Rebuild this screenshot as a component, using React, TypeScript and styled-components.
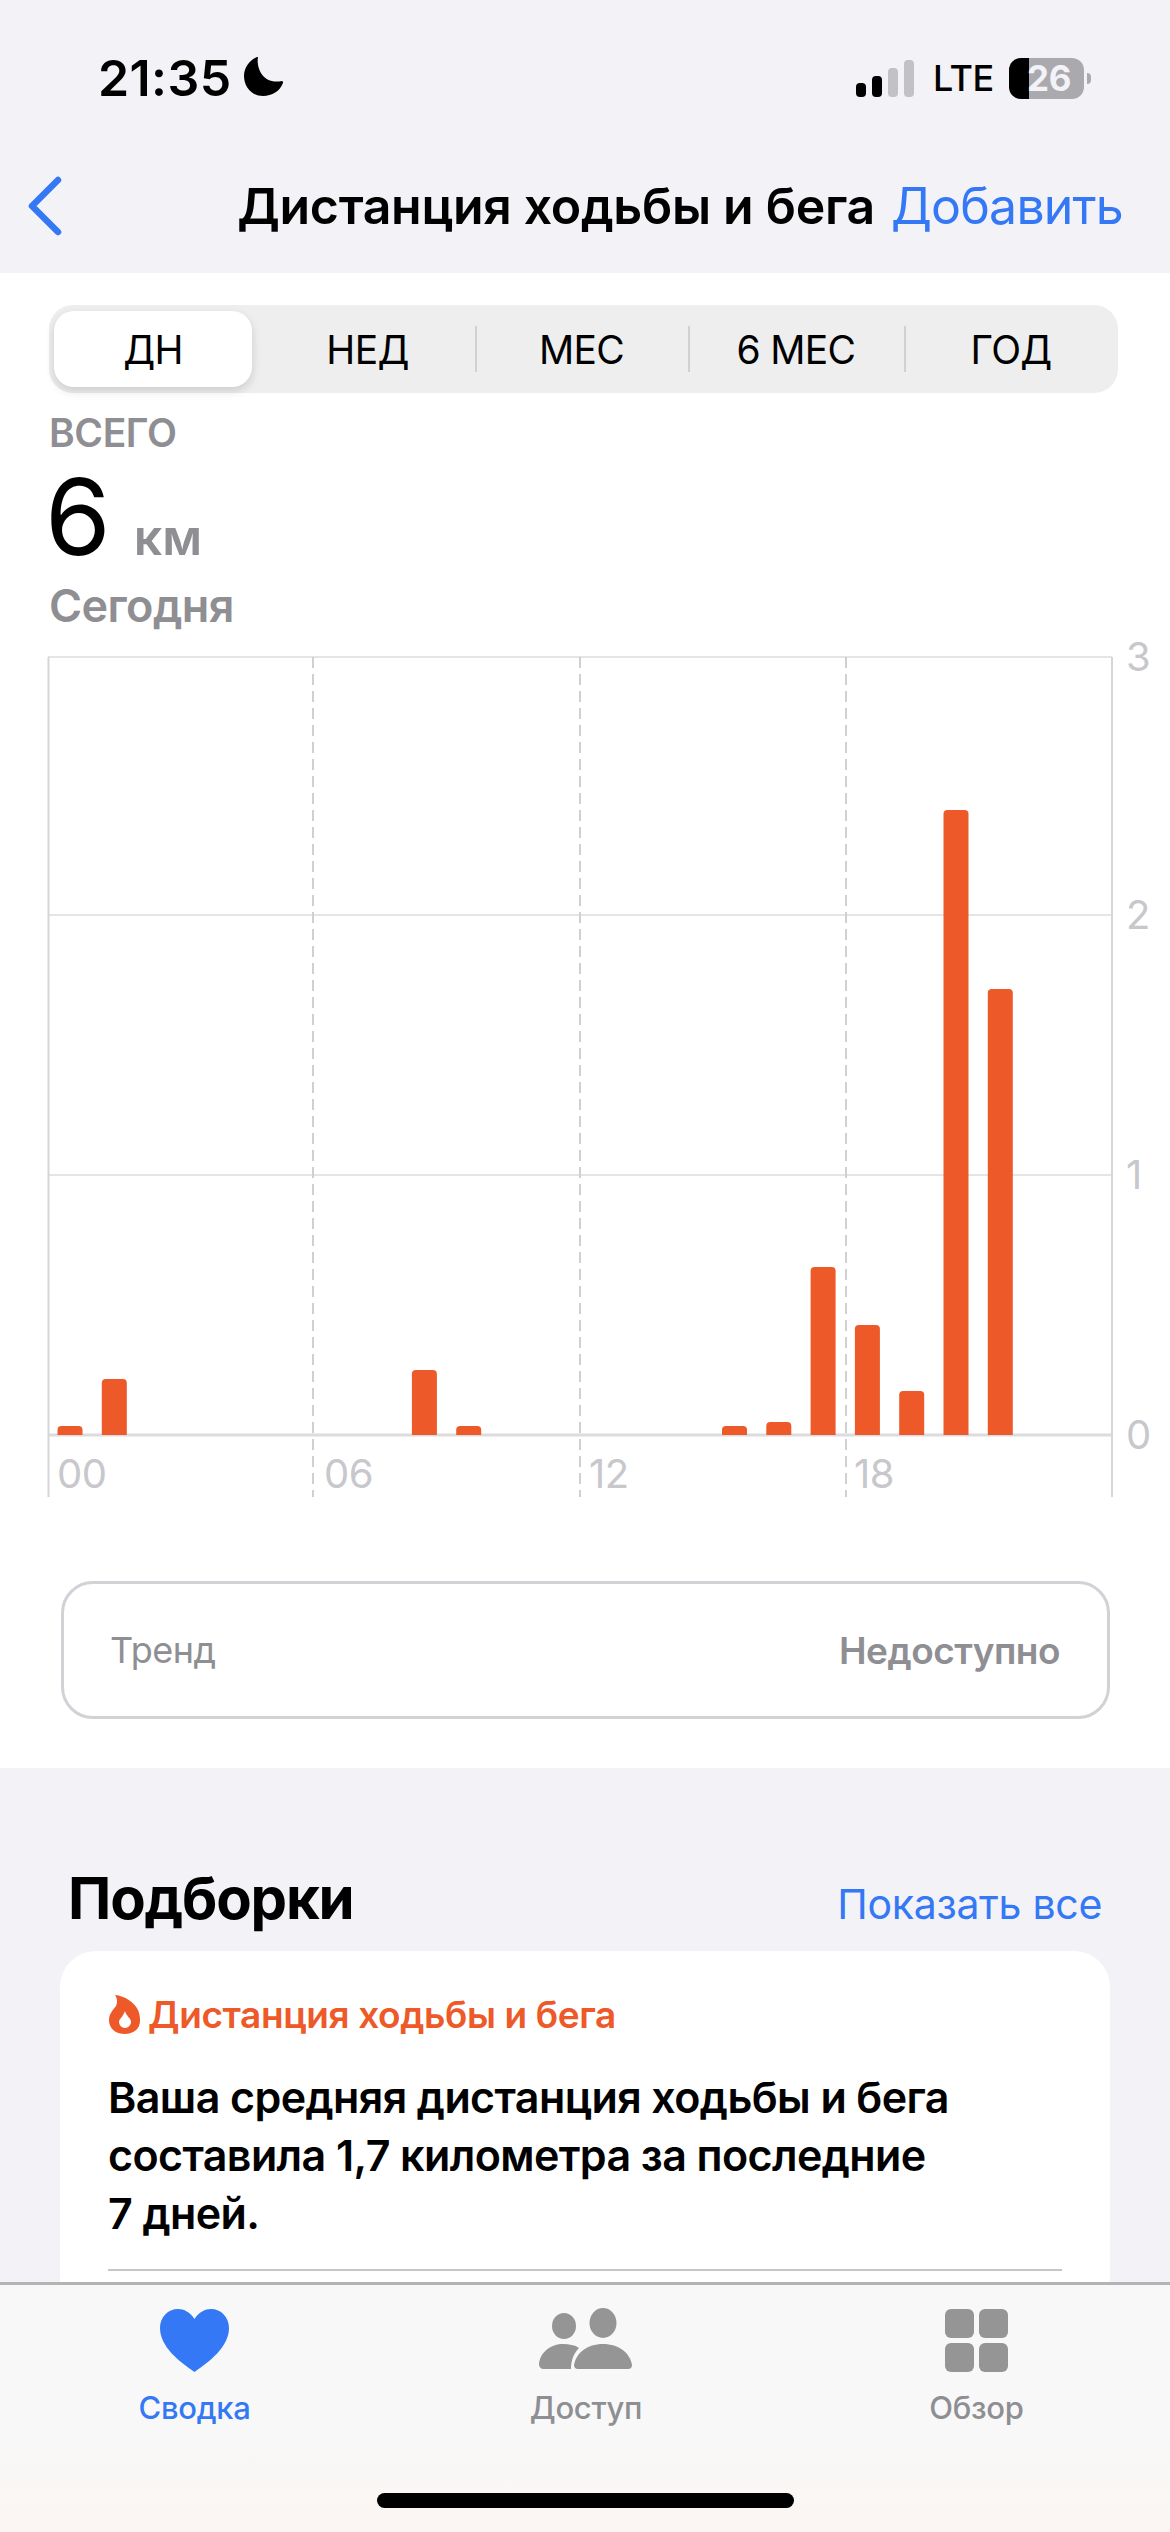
import styled, { createGlobalStyle } from 'styled-components';

const GlobalStyle = createGlobalStyle`
  html, body {
    margin: 0;
    padding: 0;
    background: #f2f2f7;
  }

  * {
    box-sizing: border-box;
  }
`;

const BLUE = '#3478f6';
const ORANGE = '#ed5928';
const GRAY = '#8e8e93';
const AXIS = '#c7c7cc';

const CHART_LEFT = 48.5;
const HOUR_WIDTH = 44.3;
const CHART_BOTTOM = 1435;

const bars = [
  { hour: 0, height: 9 },
  { hour: 1, height: 56 },
  { hour: 8, height: 65 },
  { hour: 9, height: 9 },
  { hour: 15, height: 9 },
  { hour: 16, height: 13 },
  { hour: 17, height: 168 },
  { hour: 18, height: 110 },
  { hour: 19, height: 44 },
  { hour: 20, height: 625 },
  { hour: 21, height: 446 },
];

const segments = [
  { label: 'ДН', selected: true },
  { label: 'НЕД' },
  { label: 'МЕС', divider: true },
  { label: '6 МЕС', divider: true },
  { label: 'ГОД', divider: true },
];

const Screen = styled.div`
  position: relative;
  width: 1170px;
  height: 2532px;
  overflow: hidden;
  background: #f2f2f7;
  font-family: Inter, 'Noto Sans', sans-serif;
  color: #000;
`;

const StatusBar = styled.div`
  display: flex;
  align-items: center;
  justify-content: space-between;
  height: 156px;
  padding: 0 86px 0 98px;
`;

const TimeGroup = styled.div`
  display: flex;
  align-items: center;
  gap: 13px;
`;

const Time = styled.span`
  font-size: 50px;
  font-weight: 600;
  letter-spacing: 0.4px;
  line-height: 60px;
`;

const MoonIcon = styled.svg`
  margin: -10px;
`;

const StatusIcons = styled.div`
  display: flex;
  align-items: center;
`;

const Lte = styled.span`
  width: 57px;
  margin: 0 19px;
  font-size: 36px;
  font-weight: 500;
  line-height: 48px;
  letter-spacing: -0.5px;
  white-space: nowrap;
`;

const Battery = styled.div`
  position: relative;
  display: flex;
  align-items: center;
  justify-content: center;
  width: 75px;
  height: 41px;
  padding-left: 5px;
  border-radius: 12px;
  background: linear-gradient(to right, #000 20px, #a9a9ae 20px);
  color: #f2f2f7;
  font-size: 35px;
  font-weight: 700;
  letter-spacing: -0.5px;

  &::after {
    content: '';
    position: absolute;
    top: 15px;
    right: -7px;
    width: 4px;
    height: 11px;
    border-radius: 0 6px 6px 0;
    background: #a9a9ae;
  }
`;

const NavBar = styled.div`
  display: flex;
  align-items: center;
  justify-content: space-between;
  height: 117px;
  padding: 0 47px 17px 28px;
`;

const NavRight = styled.div`
  display: flex;
  align-items: center;
  gap: 16px;
`;

const NavTitle = styled.span`
  font-size: 50px;
  font-weight: 600;
  line-height: 60px;
  letter-spacing: -0.3px;
`;

const NavAction = styled.span`
  color: ${BLUE};
  font-size: 50px;
  line-height: 60px;
  letter-spacing: -0.8px;
`;

const ChartSection = styled.section`
  padding: 32px 0 49px;
  background: #fff;
`;

const Segments = styled.div`
  display: grid;
  grid-template-columns: 211px 215px 213px 216px 214px;
  width: 1069px;
  height: 88px;
  margin-left: 49px;
  border-radius: 24px;
  background: #eeeeef;
`;

const Segment = styled.div<{ $selected?: boolean; $divider?: boolean }>`
  position: relative;
  display: flex;
  align-items: center;
  justify-content: center;
  margin: ${({ $selected }) => ($selected ? '6px 8px 6px 5px' : '0')};
  border-radius: 20px;
  background: ${({ $selected }) => ($selected ? '#fff' : 'transparent')};
  box-shadow: ${({ $selected }) => ($selected ? '0 4px 10px rgba(0, 0, 0, 0.14)' : 'none')};
  font-size: 39px;
  letter-spacing: -0.7px;

  &::before {
    content: '';
    display: ${({ $divider }) => ($divider ? 'block' : 'none')};
    position: absolute;
    top: 21px;
    left: 0;
    width: 2px;
    height: 46px;
    background: #d1d1d4;
  }
`;

const Summary = styled.div`
  padding: 17px 49px 0;
`;

const SummaryLabel = styled.div`
  color: ${GRAY};
  font-size: 39px;
  font-weight: 600;
  line-height: 46px;
  letter-spacing: -0.4px;
`;

const ValueRow = styled.div`
  display: flex;
  align-items: baseline;
  gap: 23px;
  height: 112px;
  margin-top: 5px;
`;

const Value = styled.span`
  margin-left: -4px;
  font-size: 106px;
  font-weight: 400;
  line-height: 112px;
`;

const Unit = styled.span`
  color: ${GRAY};
  font-size: 50px;
  font-weight: 600;
`;

const SummaryDate = styled.div`
  margin-top: 7px;
  color: ${GRAY};
  font-size: 45px;
  font-weight: 600;
  line-height: 52px;
  letter-spacing: -0.6px;
`;

const ChartSvg = styled.svg`
  display: block;
  width: 1170px;
  height: 870px;
  margin-top: -2px;
`;

const AxisLabel = styled.text`
  fill: ${AXIS};
  font-family: Inter, 'Noto Sans', sans-serif;
  font-size: 40px;
  letter-spacing: -0.6px;
`;

const TrendBox = styled.div`
  display: flex;
  align-items: center;
  justify-content: space-between;
  height: 138px;
  margin: 81px 60px 0 61px;
  padding: 0 47px 0 46px;
  border: 3px solid #d1d1d6;
  border-radius: 32px;
  color: ${GRAY};
  font-size: 36px;
  letter-spacing: -0.5px;
`;

const TrendValue = styled.span`
  font-size: 37px;
  font-weight: 600;
`;

const Collections = styled.section`
  padding: 98px 60px 0;
`;

const CollectionsHeader = styled.div`
  display: flex;
  align-items: center;
  justify-content: space-between;
  height: 64px;
  padding: 0 8px;
  margin-bottom: 21px;
`;

const CollectionsTitle = styled.h2`
  margin: 0;
  font-size: 58px;
  font-weight: 700;
  letter-spacing: -1.2px;
`;

const ShowAll = styled.span`
  padding-top: 12px;
  color: ${BLUE};
  font-size: 41px;
  letter-spacing: -0.3px;
`;

const Card = styled.div`
  height: 480px;
  padding: 38px 48px 0;
  border-radius: 36px;
  background: #fff;
`;

const CardLabel = styled.div`
  display: flex;
  align-items: center;
  height: 50px;
  color: ${ORANGE};
  font-size: 37px;
  font-weight: 600;
  letter-spacing: -0.4px;
`;

const CardText = styled.p`
  margin: 29px 0 0;
  font-size: 43px;
  font-weight: 600;
  line-height: 58px;
  letter-spacing: -0.6px;
`;

const CardDivider = styled.div`
  height: 2px;
  margin-top: 27px;
  background: #c6c6c8;
`;

const TabBar = styled.nav`
  position: absolute;
  left: 0;
  right: 0;
  bottom: 0;
  height: 250px;
  border-top: 3px solid #b4b4b6;
  background: linear-gradient(to bottom, #f8f8f8 0%, #f8f8f8 60%, #fbf6f3 100%);
`;

const TabList = styled.div`
  display: grid;
  grid-template-columns: 389px 394px 387px;
`;

const Tab = styled.div<{ $active?: boolean }>`
  display: flex;
  flex-direction: column;
  align-items: center;
  color: ${({ $active }) => ($active ? BLUE : GRAY)};
  font-size: 31px;
  font-weight: 500;
  letter-spacing: -0.3px;
`;

const TabIcon = styled.div`
  display: flex;
  align-items: center;
  justify-content: center;
  height: 80px;
  margin: 15px 0 9px;
`;

const TileGrid = styled.div`
  display: grid;
  grid-template-columns: 29px 29px;
  grid-template-rows: 29px 29px;
  gap: 5px;
`;

const Tile = styled.div`
  border-radius: 6px;
  background: #959595;
`;

const HomeIndicator = styled.div`
  position: absolute;
  left: 377px;
  bottom: 24px;
  width: 417px;
  height: 15px;
  border-radius: 8px;
  background: #000;
`;

const Moon = () => (
  <MoonIcon width="60" height="60" viewBox="0 0 60 60">
    <path
      d="M23 9C21 20 28 37 47 33C48 33 48 34 48 35C45 43 37 48 28 48C17 48 9 39 9 28C9 19 15 12 22 9Z"
      fill="#000"
    />
  </MoonIcon>
);

const Signal = () => (
  <svg width="58" height="37" viewBox="0 0 58 37">
    <rect x="0" y="23" width="10" height="14" rx="4" fill="#000" />
    <rect x="16" y="16" width="10" height="21" rx="4" fill="#000" />
    <rect x="32" y="8" width="10" height="29" rx="4" fill="#c1c1c6" />
    <rect x="48" y="0" width="10" height="37" rx="4" fill="#c1c1c6" />
  </svg>
);

const BackChevron = () => (
  <svg width="34" height="60" viewBox="0 0 34 60">
    <path
      d="M30 4L4 30L30 56"
      fill="none"
      stroke={BLUE}
      strokeWidth="6.5"
      strokeLinecap="round"
      strokeLinejoin="round"
    />
  </svg>
);

const Flame = () => (
  <svg width="40" height="50" viewBox="10 5 40 50">
    <path
      d="M17 11C27 12 36 18 40 26C42 31 42 34 42 37C42 45 35 50 27 50C17 50 11 44 11 36C11 30 15 26 18 22C20 18 19 14 17 11Z"
      fill={ORANGE}
    />
    <path
      d="M27 27C28 32 33 34 33 38C33 41 30 44 27 44C24 44 21 41 21 38C21 35 25 33 27 27Z"
      fill="#fff"
    />
  </svg>
);

const Heart = () => (
  <svg width="69" height="63" viewBox="0 0 69 63">
    <path
      d="M34.5 10C30 3 24 0 18 0C8 0 0 8 0 19C0 38 20 53 34.5 63C49 53 69 38 69 19C69 8 61 0 51 0C45 0 39 3 34.5 10Z"
      fill={BLUE}
    />
  </svg>
);

const People = () => (
  <svg width="110" height="80" viewBox="0 0 110 80">
    <ellipse cx="33" cy="26" rx="12" ry="13" fill="#959595" />
    <ellipse cx="72" cy="23" rx="13.5" ry="15" fill="#959595" />
    <path
      d="M8 64C9 52 20 44 32 44C38 44 44 45 48 48C43 53 40 60 40 69L13 69C10 69 8 67 8 64Z"
      fill="#959595"
    />
    <path
      d="M43 65C45 53 56 44 72 44C88 44 99 53 101 65C101 67 100 69 97 69L47 69C44 69 43 67 43 65Z"
      fill="#959595"
    />
  </svg>
);

const Chart = () => (
  <ChartSvg viewBox="0 630 1170 870">
    {[657, 915, 1175].map((y) => (
      <line key={y} x1="48" x2="1112" y1={y} y2={y} stroke="#e5e5e7" strokeWidth="2" />
    ))}
    <line x1="48" x2="1112" y1={CHART_BOTTOM} y2={CHART_BOTTOM} stroke="#dcdcde" strokeWidth="3" />
    {[48.5, 1112].map((x) => (
      <line key={x} x1={x} x2={x} y1="657" y2="1497" stroke="#d6d6d8" strokeWidth="2" />
    ))}
    {[313, 580, 846].map((x) => (
      <line
        key={x}
        x1={x}
        x2={x}
        y1="657"
        y2="1497"
        stroke="#d0d0d2"
        strokeWidth="2"
        strokeDasharray="11 6"
      />
    ))}
    {bars.map(({ hour, height }) => (
      <path
        key={hour}
        d={`M${CHART_LEFT + 9 + hour * HOUR_WIDTH} ${CHART_BOTTOM}v${-(height - 4)}q0 -4 4 -4h17q4 0 4 4v${height - 4}z`}
        fill={ORANGE}
      />
    ))}
    {[
      { text: '00', x: 57 },
      { text: '06', x: 324 },
      { text: '12', x: 589 },
      { text: '18', x: 854 },
    ].map(({ text, x }) => (
      <AxisLabel key={text} x={x} y="1488">
        {text}
      </AxisLabel>
    ))}
    {[
      { text: '3', y: 671 },
      { text: '2', y: 929 },
      { text: '1', y: 1189 },
      { text: '0', y: 1449 },
    ].map(({ text, y }) => (
      <AxisLabel key={text} x="1126" y={y}>
        {text}
      </AxisLabel>
    ))}
  </ChartSvg>
);

const App = () => (
  <Screen>
    <GlobalStyle />
    <StatusBar>
      <TimeGroup>
        <Time>21:35</Time>
        <Moon />
      </TimeGroup>
      <StatusIcons>
        <Signal />
        <Lte>LTE</Lte>
        <Battery>26</Battery>
      </StatusIcons>
    </StatusBar>
    <NavBar>
      <BackChevron />
      <NavRight>
        <NavTitle>Дистанция ходьбы и бега</NavTitle>
        <NavAction>Добавить</NavAction>
      </NavRight>
    </NavBar>
    <ChartSection>
      <Segments>
        {segments.map(({ label, selected, divider }) => (
          <Segment key={label} $selected={selected} $divider={divider}>
            {label}
          </Segment>
        ))}
      </Segments>
      <Summary>
        <SummaryLabel>ВСЕГО</SummaryLabel>
        <ValueRow>
          <Value>6</Value>
          <Unit>км</Unit>
        </ValueRow>
        <SummaryDate>Сегодня</SummaryDate>
      </Summary>
      <Chart />
      <TrendBox>
        <span>Тренд</span>
        <TrendValue>Недоступно</TrendValue>
      </TrendBox>
    </ChartSection>
    <Collections>
      <CollectionsHeader>
        <CollectionsTitle>Подборки</CollectionsTitle>
        <ShowAll>Показать все</ShowAll>
      </CollectionsHeader>
      <Card>
        <CardLabel>
          <Flame />
          Дистанция ходьбы и бега
        </CardLabel>
        <CardText>
          Ваша средняя дистанция ходьбы и бега
          <br />
          составила 1,7 километра за последние
          <br />
          7 дней.
        </CardText>
        <CardDivider />
      </Card>
    </Collections>
    <TabBar>
      <TabList>
        <Tab $active>
          <TabIcon>
            <Heart />
          </TabIcon>
          Сводка
        </Tab>
        <Tab>
          <TabIcon>
            <People />
          </TabIcon>
          Доступ
        </Tab>
        <Tab>
          <TabIcon>
            <TileGrid>
              <Tile />
              <Tile />
              <Tile />
              <Tile />
            </TileGrid>
          </TabIcon>
          Обзор
        </Tab>
      </TabList>
      <HomeIndicator />
    </TabBar>
  </Screen>
);

export default App;
